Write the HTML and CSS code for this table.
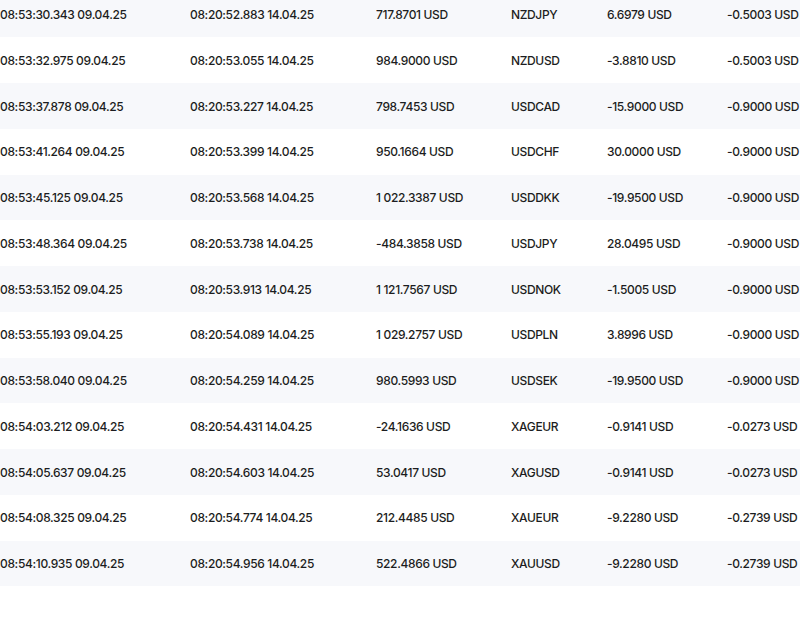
FILE: index.html
```html
<!DOCTYPE html>
<html>
<head>
<meta charset="utf-8">
<link rel="stylesheet" href="styles.css">
</head>
<body>
<div class="table">
  <div class="row"><span>08:53:30.343 09.04.25</span><span>08:20:52.883 14.04.25</span><span>717.8701 USD</span><span>NZDJPY</span><span>6.6979 USD</span><span>-0.5003 USD</span></div>
  <div class="row"><span>08:53:32.975 09.04.25</span><span>08:20:53.055 14.04.25</span><span>984.9000 USD</span><span>NZDUSD</span><span>-3.8810 USD</span><span>-0.5003 USD</span></div>
  <div class="row"><span>08:53:37.878 09.04.25</span><span>08:20:53.227 14.04.25</span><span>798.7453 USD</span><span>USDCAD</span><span>-15.9000 USD</span><span>-0.9000 USD</span></div>
  <div class="row"><span>08:53:41.264 09.04.25</span><span>08:20:53.399 14.04.25</span><span>950.1664 USD</span><span>USDCHF</span><span>30.0000 USD</span><span>-0.9000 USD</span></div>
  <div class="row"><span>08:53:45.125 09.04.25</span><span>08:20:53.568 14.04.25</span><span>1&nbsp;022.3387 USD</span><span>USDDKK</span><span>-19.9500 USD</span><span>-0.9000 USD</span></div>
  <div class="row"><span>08:53:48.364 09.04.25</span><span>08:20:53.738 14.04.25</span><span>-484.3858 USD</span><span>USDJPY</span><span>28.0495 USD</span><span>-0.9000 USD</span></div>
  <div class="row"><span>08:53:53.152 09.04.25</span><span>08:20:53.913 14.04.25</span><span>1&nbsp;121.7567 USD</span><span>USDNOK</span><span>-1.5005 USD</span><span>-0.9000 USD</span></div>
  <div class="row"><span>08:53:55.193 09.04.25</span><span>08:20:54.089 14.04.25</span><span>1&nbsp;029.2757 USD</span><span>USDPLN</span><span>3.8996 USD</span><span>-0.9000 USD</span></div>
  <div class="row"><span>08:53:58.040 09.04.25</span><span>08:20:54.259 14.04.25</span><span>980.5993 USD</span><span>USDSEK</span><span>-19.9500 USD</span><span>-0.9000 USD</span></div>
  <div class="row"><span>08:54:03.212 09.04.25</span><span>08:20:54.431 14.04.25</span><span>-24.1636 USD</span><span>XAGEUR</span><span>-0.9141 USD</span><span>-0.0273 USD</span></div>
  <div class="row"><span>08:54:05.637 09.04.25</span><span>08:20:54.603 14.04.25</span><span>53.0417 USD</span><span>XAGUSD</span><span>-0.9141 USD</span><span>-0.0273 USD</span></div>
  <div class="row"><span>08:54:08.325 09.04.25</span><span>08:20:54.774 14.04.25</span><span>212.4485 USD</span><span>XAUEUR</span><span>-9.2280 USD</span><span>-0.2739 USD</span></div>
  <div class="row"><span>08:54:10.935 09.04.25</span><span>08:20:54.956 14.04.25</span><span>522.4866 USD</span><span>XAUUSD</span><span>-9.2280 USD</span><span>-0.2739 USD</span></div>
</div>
</body>
</html>
```
FILE: styles.css
```css
html, body {
  margin: 0;
  padding: 0;
  background: #ffffff;
  overflow: hidden;
}
body {
  font-family: Inter, "Noto Sans", sans-serif;
  font-size: 12px;
  font-weight: 500;
  letter-spacing: -0.35px;
  color: #1c1d21;
}
.table {
  margin-top: -8.3px;
  width: 800px;
}
.row {
  display: grid;
  grid-template-columns: 190px 186px 135px 96px 120px 1fr;
  align-items: center;
  height: 45.75px;
  white-space: nowrap;
}
.row:nth-child(odd) {
  background: #f7f8fb;
}
.row span {
  overflow: hidden;
}
```
